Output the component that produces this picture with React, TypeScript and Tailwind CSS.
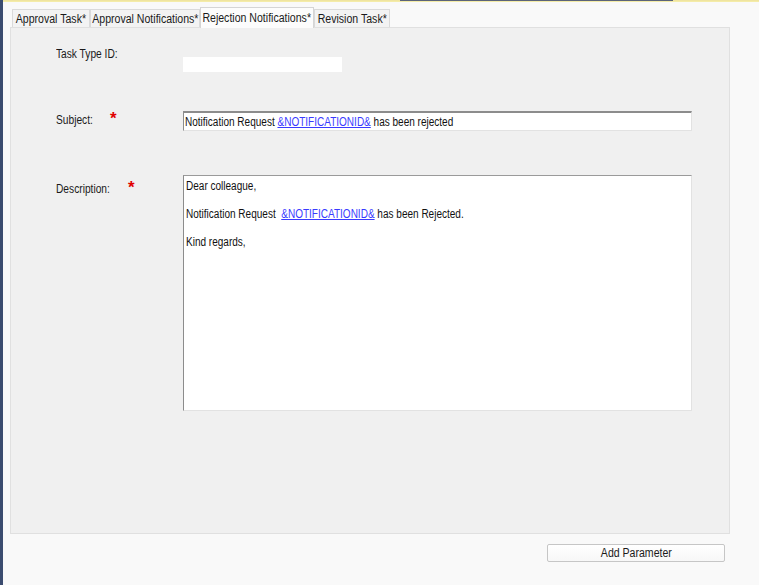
import React from "react";

const F = { fontFamily: '"Liberation Sans", Arial, sans-serif' };

function Tab({ label, w, selected }: { label: string; w: string; selected?: boolean }) {
  if (selected) {
    return (
      <div
        className={`relative top-px z-10 flex h-[21px] justify-center border border-b-0 border-[#d5d5d5] bg-[#fcfcfc] pt-[3px] text-[12px] leading-[14px] text-[#1a1a1a] ${w}`}
      >
        <span className="inline-block scale-x-[0.88] whitespace-nowrap">{label}</span>
      </div>
    );
  }
  return (
    <div
      className={`flex h-[18px] justify-center border border-b-0 border-[#dadada] bg-[#f3f3f3] pt-[2px] text-[12px] leading-[14px] text-[#1a1a1a] ${w}`}
    >
      <span className="inline-block scale-x-[0.88] whitespace-nowrap">{label}</span>
    </div>
  );
}

function Link({ children }: { children: React.ReactNode }) {
  return <span className="text-[#3a3aff] underline">{children}</span>;
}

function Label({ text, w, star }: { text: string; w: string; star?: boolean }) {
  return (
    <div className="flex items-start text-[12px] leading-[14px] text-[#1a1a1a]">
      <div className={`shrink-0 ${w}`}>
        <span className="inline-block origin-left scale-x-[0.85] whitespace-nowrap">{text}</span>
      </div>
      {star && (
        <span className="-mt-[3px] text-[17px] font-bold leading-[17px] text-[#e00000]">*</span>
      )}
    </div>
  );
}

export default function App() {
  return (
    <div className="flex h-[585px] w-[759px] overflow-hidden bg-[#f9f9f9]" style={F}>
      <div className="w-[3px] shrink-0 bg-[#3b4c6f]" />
      <div className="flex flex-1 flex-col">
        <div className="flex h-[2px] flex-col">
          <div className="flex h-px">
            <div className="w-[397px] bg-[#efe4a0]" />
            <div className="w-[273px] bg-[#5b6479]" />
            <div className="flex-1 bg-[#efe4a0]" />
          </div>
          <div className="h-px bg-[#f4eca8]" />
        </div>

        {/* tabs */}
        <div className="ml-[9px] mt-[4px] flex h-[21px] items-end">
          <Tab label="Approval Task*" w="w-[78px]" />
          <Tab label="Approval Notifications*" w="w-[110px]" />
          <Tab label="Rejection Notifications*" w="w-[114px]" selected />
          <Tab label="Revision Task*" w="w-[76px]" />
        </div>

        {/* panel */}
        <div className="ml-[7px] h-[507px] w-[720px] border border-[#e0e0e0] bg-[#f0f0f0]">
          <div className="flex h-full flex-col pl-[45px]">
            {/* Task Type ID */}
            <div className="flex h-[44px] items-start">
              <div className="mt-[19px] w-[127px]">
                <Label text="Task Type ID:" w="w-[127px]" />
              </div>
              <div className="mt-[29px] h-[15px] w-[159px] bg-white" />
            </div>

            {/* Subject */}
            <div className="flex items-start">
              <div className="mt-[41px] w-[127px]">
                <Label text="Subject:" w="w-[54px]" star />
              </div>
              <div className="mt-[39px] flex h-[20px] w-[509px] items-center border border-t-2 border-[#e2e2e2] border-l-[#8c8c8c] border-t-[#8c8c8c] bg-white pl-px text-[12px] leading-[14px] text-[#111]">
                <span className="inline-block origin-left scale-x-[0.835] whitespace-nowrap">
                  Notification Request <Link>&amp;NOTIFICATIONID&amp;</Link> has been rejected
                </span>
              </div>
            </div>

            {/* Description */}
            <div className="flex items-start">
              <div className="mt-[51px] w-[127px]">
                <Label text="Description:" w="w-[72px]" star />
              </div>
              <div className="mt-[44px] flex h-[236px] w-[509px] flex-col gap-[14px] border border-[#e2e2e2] border-l-[#8c8c8c] border-t-[#9a9a9a] bg-white pl-[2px] pt-[3px] text-[12px] leading-[14px] text-[#111]">
                <span className="block origin-left scale-x-[0.835] whitespace-nowrap">Dear colleague,</span>
                <span className="block origin-left scale-x-[0.835] whitespace-nowrap">
                  Notification Request&nbsp; <Link>&amp;NOTIFICATIONID&amp;</Link> has been Rejected.
                </span>
                <span className="block origin-left scale-x-[0.835] whitespace-nowrap">Kind regards,</span>
              </div>
            </div>
          </div>
        </div>

        {/* bottom */}
        <div className="ml-[544px] mt-[10px] flex h-[18px] w-[178px] items-center justify-center rounded-[2px] border border-[#c6c6c6] bg-gradient-to-b from-white to-[#f7f7f7] text-[12px] leading-[14px] text-[#1a1a1a]">
          <span className="inline-block scale-x-[0.88] whitespace-nowrap">Add Parameter</span>
        </div>
      </div>
    </div>
  );
}
